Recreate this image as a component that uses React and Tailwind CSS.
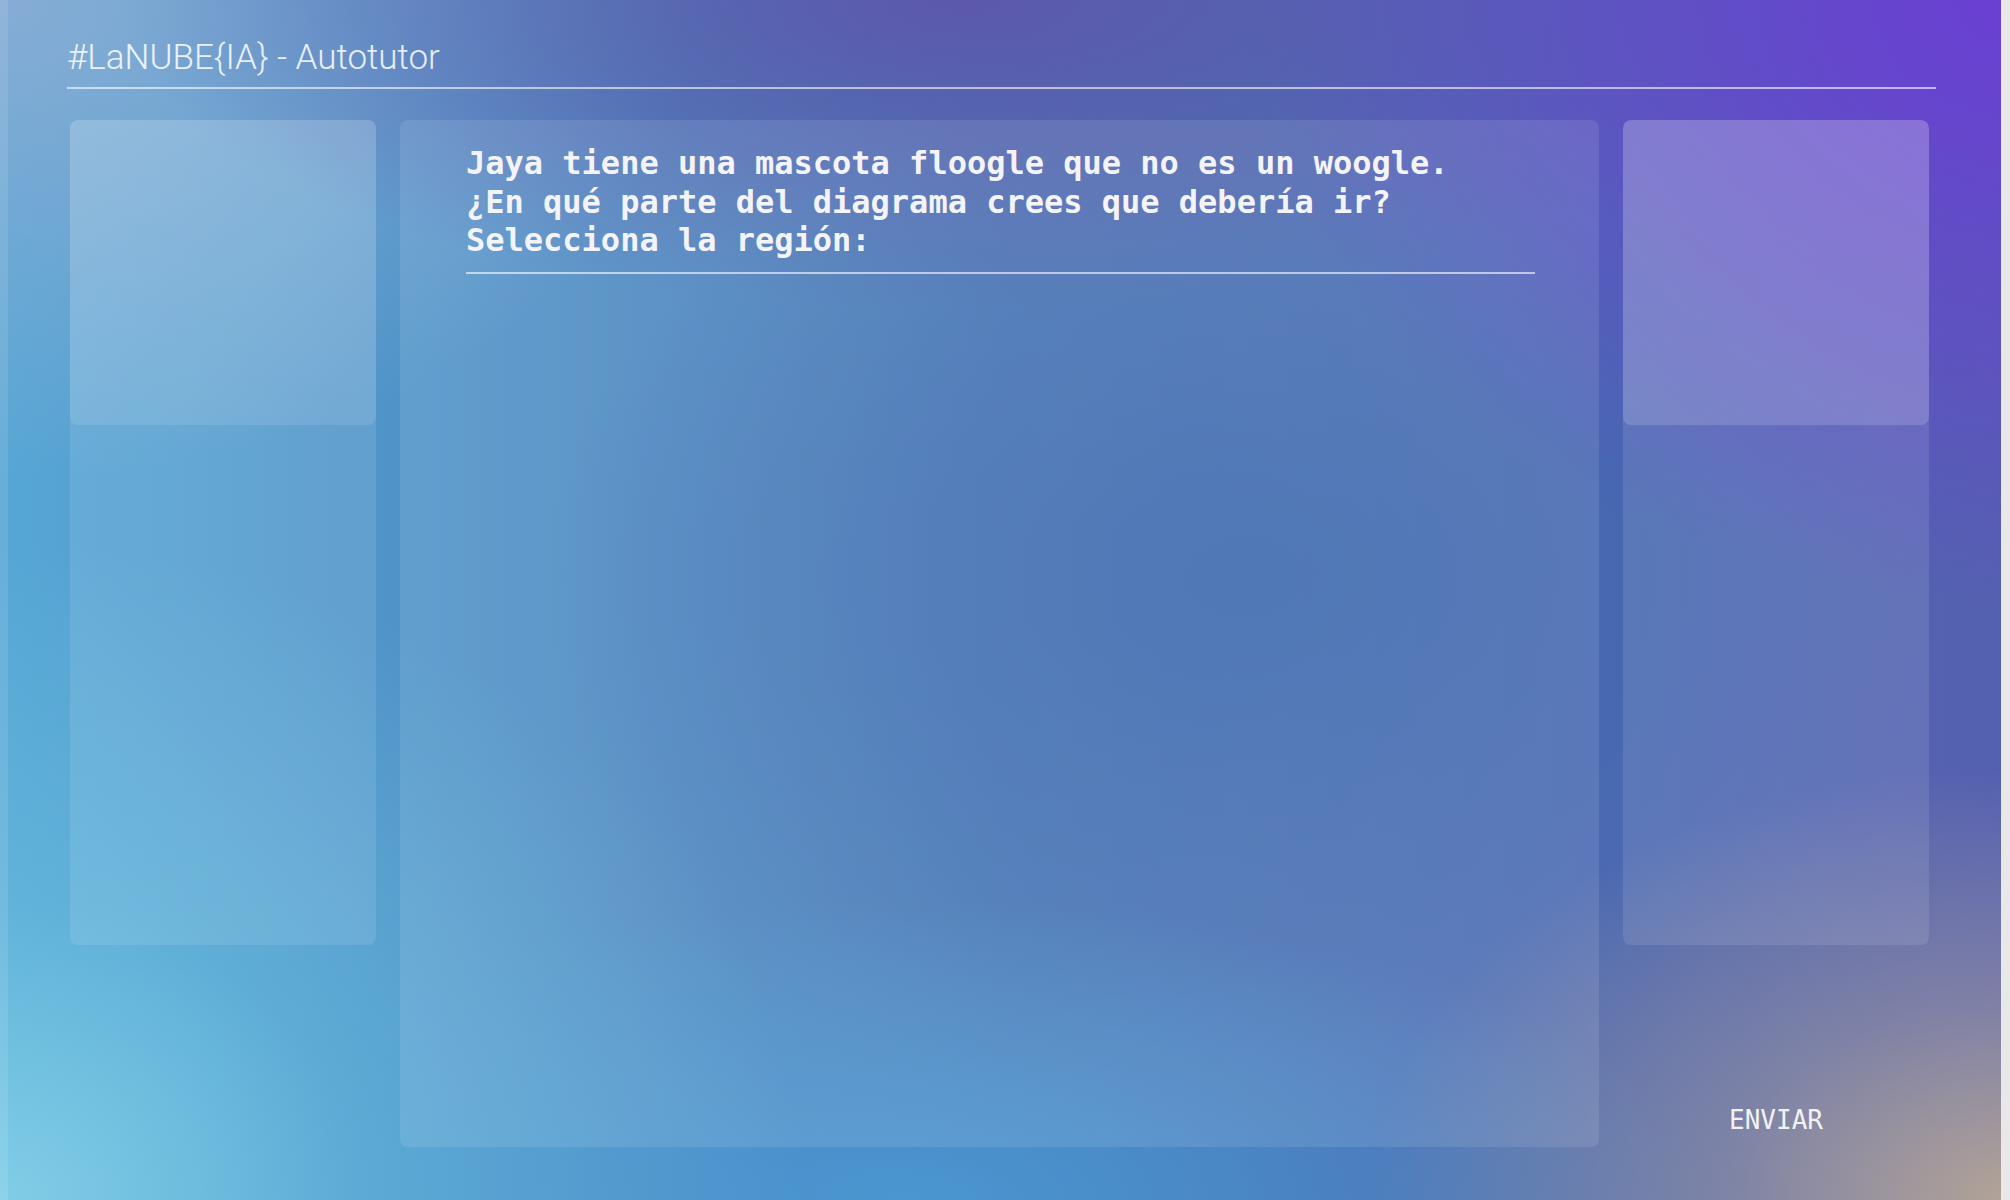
export default function App() {
  const question = [
    "Jaya tiene una mascota floogle que no es un woogle.",
    "¿En qué parte del diagrama crees que debería ir?",
    "Selecciona la región:",
  ];

  return (
    <div className="flex h-[1200px] w-full overflow-hidden bg-[image:radial-gradient(ellipse_38%_50%_at_100%_0%,#6a3fd4_0%,rgba(106,63,212,0.55)_45%,transparent_100%),radial-gradient(ellipse_32%_36%_at_100%_100%,#b3a497_0%,rgba(170,160,155,0.5)_45%,transparent_100%),radial-gradient(ellipse_42%_26%_at_48%_0%,#5d58aa,transparent),radial-gradient(ellipse_40%_55%_at_0%_100%,#80cde6_0%,rgba(110,195,225,0.45)_45%,transparent_100%),radial-gradient(ellipse_35%_40%_at_0%_0%,#86acd4,transparent),radial-gradient(ellipse_40%_25%_at_45%_100%,#4b96d0,transparent),radial-gradient(ellipse_35%_40%_at_62%_48%,#3d68ae,transparent),linear-gradient(to_right,#56a6d5,#4577b5_50%,#5560b0)]">
      {/* left edge strip */}
      <div className="w-2 shrink-0 bg-white/10"></div>

      <main className="flex min-w-0 flex-1 flex-col pb-[53px]">
        {/* Header */}
        <header className="pl-[59px] pr-[65px] pt-[37px]">
          <h1 className="border-b-2 border-white/60 pb-[9px] font-['Roboto',sans-serif] text-[35px] font-light leading-[41px] text-white/85">
            #LaNUBE{"{"}IA{"}"} - Autotutor
          </h1>
        </header>

        {/* Panels */}
        <div className="mt-[31px] grid min-h-0 flex-1 grid-cols-[306px_1fr_306px] gap-6 pl-[62px] pr-[72px]">
          <div className="flex flex-col">
            <div className="h-[825px] overflow-hidden rounded-lg bg-white/10">
              <div className="h-[305px] rounded-lg bg-white/10"></div>
            </div>
          </div>

          <section className="rounded-lg bg-white/10 pl-[66px] pr-16 pt-6">
            <div className="border-b-2 border-white/60 pb-[12px] font-['DejaVu_Sans_Mono',monospace] text-[32px] font-bold leading-[38.5px] text-[#f4f4f8]">
              {question.map((line, i) => (
                <p key={i}>{line}</p>
              ))}
            </div>
          </section>

          <div className="flex flex-col">
            <div className="h-[825px] overflow-hidden rounded-lg bg-white/10">
              <div className="h-[305px] rounded-lg bg-white/15"></div>
            </div>
            <div className="flex flex-1 items-end justify-center">
              <button className="px-6 py-3 font-['DejaVu_Sans_Mono',monospace] text-[26px] leading-[30px] text-[#f2f2f2]">
                ENVIAR
              </button>
            </div>
          </div>
        </div>
      </main>

      {/* scrollbar track */}
      <div className="w-[9px] shrink-0 bg-[#e8e8e8]"></div>
    </div>
  );
}
